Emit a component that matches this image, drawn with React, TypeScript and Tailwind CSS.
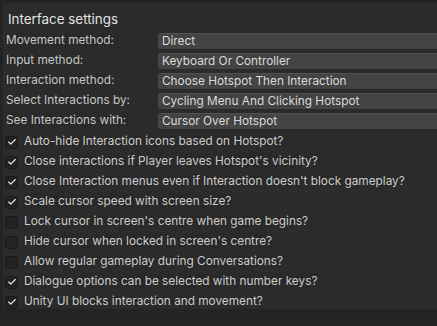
import { Check } from 'lucide-react';

const dropdowns = [
  { label: 'Movement method:', value: 'Direct' },
  { label: 'Input method:', value: 'Keyboard Or Controller' },
  { label: 'Interaction method:', value: 'Choose Hotspot Then Interaction' },
  { label: 'Select Interactions by:', value: 'Cycling Menu And Clicking Hotspot' },
  { label: 'See Interactions with:', value: 'Cursor Over Hotspot' },
];

const toggles = [
  { label: 'Auto-hide Interaction icons based on Hotspot?', on: true },
  { label: "Close interactions if Player leaves Hotspot's vicinity?", on: true },
  { label: "Close Interaction menus even if Interaction doesn't block gameplay?", on: true },
  { label: 'Scale cursor speed with screen size?', on: true },
  { label: "Lock cursor in screen's centre when game begins?", on: false },
  { label: "Hide cursor when locked in screen's centre?", on: false },
  { label: 'Allow regular gameplay during Conversations?', on: false },
  { label: 'Dialogue options can be selected with number keys?', on: true },
  { label: 'Unity UI blocks interaction and movement?', on: true },
];

function Toggle({ label, on }: { label: string; on: boolean }) {
  return (
    <div className="flex h-5 shrink-0 items-center">
      <div className="ml-[2px] flex h-[13px] w-[13px] items-center justify-center rounded-[3px] border border-[#1a1a1a] bg-[#232323]">
        {on && <Check size={10} strokeWidth={2.8} className="text-[#e8e8e8]" />}
      </div>
      <span className="ml-[6px] whitespace-nowrap text-[#c8c8c8]">{label}</span>
    </div>
  );
}

export default function App() {
  return (
    <div
      className="h-[326px] w-[437px] overflow-hidden bg-[#232323] pl-[3px] pt-[3px] text-[11.8px] leading-none"
      style={{ fontFamily: 'Inter, "Liberation Sans", sans-serif' }}
    >
      <div className="flex h-[306px] flex-col bg-[#2b2b2b]">
        <div className="flex h-[28px] shrink-0 items-center pl-[5px] pt-[6px] text-[13.4px] text-[#e2e2e2]">
          Interface settings
        </div>
        <div className="flex shrink-0 flex-col">
          {dropdowns.map((d) => (
            <div key={d.label} className="flex h-5 shrink-0 items-center pl-[3px]">
              <span className="w-[152px] shrink-0 whitespace-nowrap text-[#c4c4c4]">{d.label}</span>
              <div className="flex h-[16px] flex-1 items-center rounded-l-[3px] border-t border-[#4f4f4f] bg-[#444444] pl-[4px] text-[#d8d8d8]">
                {d.value}
              </div>
            </div>
          ))}
        </div>
        <div className="mt-[1px] flex shrink-0 flex-col">
          {toggles.map((t) => (
            <Toggle key={t.label} label={t.label} on={t.on} />
          ))}
        </div>
      </div>
    </div>
  );
}
